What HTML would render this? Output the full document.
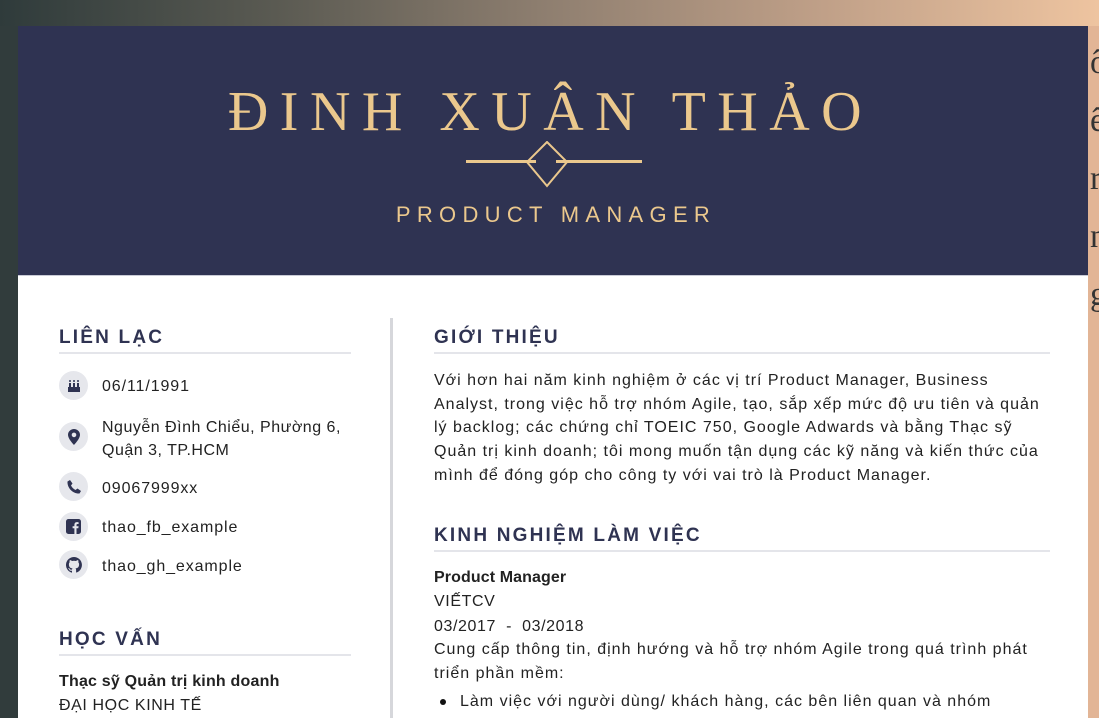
<!DOCTYPE html>
<html style="overflow:hidden;height:718px"><head><meta charset="utf-8"><style>
*{margin:0;padding:0;box-sizing:border-box}
body{width:1099px;height:718px;overflow:hidden;position:relative;font-family:"Liberation Sans","Noto Sans CJK SC",sans-serif;background:linear-gradient(90deg,#2f3b3b 0%,#5a5a52 25%,#8f7f70 50%,#c0a088 75%,#eec4a0 100%)}
.leftbg{position:absolute;left:0;top:26px;width:18px;height:692px;background:#313c3c}
.rightbg{position:absolute;left:1088px;top:26px;width:11px;height:692px;background:#e2b596;font-family:"Liberation Serif",serif;color:#333;font-size:34px;overflow:hidden}
.card{position:absolute;left:18px;top:26px;width:1070px;height:692px;background:#fff;overflow:hidden}
.hdr{position:absolute;left:0;top:0;width:1070px;height:250px;background:#2f3352;border-bottom:1px solid #c9cbd6}
.name{position:absolute;left:-8px;width:1070px;top:56px;text-align:center;font-family:"Liberation Serif",serif;color:#ebc88d;font-size:56px;letter-spacing:11.5px;padding-left:11px;line-height:60px;white-space:nowrap}
.sub{position:absolute;left:0;width:1070px;top:176px;text-align:center;color:#ebc88d;font-size:22px;letter-spacing:6.3px;padding-left:6px}
.h{position:absolute;color:#2f3352;font-weight:bold;font-size:19px;letter-spacing:2.2px;border-bottom:2px solid #e4e5ea;padding-bottom:2px;line-height:24px}
.t{position:absolute;color:#222;font-size:16px;line-height:23.7px;letter-spacing:0.6px;white-space:nowrap}
.ic{position:absolute;left:41px;width:29px;height:29px;border-radius:50%;background:#e6e7ec;display:flex;align-items:center;justify-content:center}
.ci{position:absolute;left:84px;color:#222;font-size:16px;line-height:23px;letter-spacing:0.9px;white-space:nowrap}
</style></head><body>
<div class="leftbg"></div>
<div class="rightbg"><div style="position:absolute;left:2px;top:8px;line-height:58px">ô<br>ê<br>r<br>n<br>g</div></div>
<div class="card">
<div class="hdr">
<div class="name">ĐINH XUÂN THẢO</div>
<svg style="position:absolute;left:448px;top:115px" width="176" height="48"><line x1="0" y1="20.5" x2="70" y2="20.5" stroke="#ebc88d" stroke-width="3"/><line x1="90" y1="20.5" x2="176" y2="20.5" stroke="#ebc88d" stroke-width="3"/><polygon points="81,1 101,21 81,45 61,21" fill="none" stroke="#ebc88d" stroke-width="2"/></svg>
<div class="sub">PRODUCT MANAGER</div>
</div>
<div style="position:absolute;left:372px;top:292px;width:3px;height:400px;background:#d6d7db"></div>

<div class="h" style="left:41px;top:300px;width:292px">LIÊN LẠC</div>
<div class="ic" style="top:345px"><svg width="16" height="16" viewBox="0 0 16 16"><rect x="2" y="9" width="12" height="5" fill="#2f3352"/><rect x="3" y="5" width="2" height="4" fill="#2f3352"/><rect x="7" y="5" width="2" height="4" fill="#2f3352"/><rect x="11" y="5" width="2" height="4" fill="#2f3352"/><circle cx="4" cy="3" r="1" fill="#2f3352"/><circle cx="8" cy="3" r="1" fill="#2f3352"/><circle cx="12" cy="3" r="1" fill="#2f3352"/></svg></div>
<div class="ci" style="top:349px">06/11/1991</div>
<div class="ic" style="top:396px"><svg width="12" height="16" viewBox="0 0 12 16"><path d="M6 0C2.7 0 0 2.6 0 5.8 0 10 6 16 6 16s6-6 6-10.2C12 2.6 9.3 0 6 0zm0 8.2a2.3 2.3 0 110-4.6 2.3 2.3 0 010 4.6z" fill="#2f3352"/></svg></div>
<div class="ci" style="top:390px;letter-spacing:0.5px">Nguyễn Đình Chiểu, Phường 6,<br>Quận 3, TP.HCM</div>
<div class="ic" style="top:446px"><svg width="14" height="14" viewBox="0 0 14 14"><path d="M3 0l2.5 3.5-1.5 2c1 2 2.5 3.5 4.5 4.5l2-1.5L14 11l-1.5 2.5C6 14 0 8 .5 1.5z" fill="#2f3352"/></svg></div>
<div class="ci" style="top:451px">09067999xx</div>
<div class="ic" style="top:486px"><svg width="15" height="15" viewBox="0 0 15 15"><rect width="15" height="15" rx="2.5" fill="#2f3352"/><path d="M10.5 15V9.3h1.8l.3-2h-2.1V6c0-.6.2-1 1-1h1.1V3.2c-.3 0-.9-.1-1.6-.1-1.6 0-2.6.9-2.6 2.7v1.5H6.6v2h1.8V15z" fill="#e6e7ec"/></svg></div>
<div class="ci" style="top:490px">thao_fb_example</div>
<div class="ic" style="top:524px"><svg width="16" height="16" viewBox="0 0 16 16"><path d="M8 0a8 8 0 00-2.5 15.6c.4 0 .5-.2.5-.4v-1.5c-2.2.5-2.7-1-2.7-1-.4-.9-.9-1.2-.9-1.2-.7-.5.1-.5.1-.5.8.1 1.2.8 1.2.8.7 1.3 1.9.9 2.3.7.1-.5.3-.9.5-1.1-1.8-.2-3.6-.9-3.6-4 0-.9.3-1.600.8-2.1-.1-.2-.4-1 .1-2.1 0 0 .7-.2 2.2.8a7.5 7.5 0 014 0c1.5-1 2.2-.8 2.2-.8.4 1.1.2 1.9.1 2.1.5.6.8 1.3.8 2.1 0 3.1-1.9 3.8-3.6 4 .3.3.6.8.6 1.5v2.2c0 .2.1.5.6.4A8 8 0 008 0z" fill="#2f3352"/></svg></div>
<div class="ci" style="top:529px">thao_gh_example</div>

<div class="h" style="left:41px;top:602px;width:292px">HỌC VẤN</div>
<div class="t" style="left:41px;top:644px;font-weight:bold;letter-spacing:0.2px">Thạc sỹ Quản trị kinh doanh</div>
<div class="t" style="left:41px;top:668px">ĐẠI HỌC KINH TẾ</div>

<div class="h" style="left:416px;top:300px;width:616px">GIỚI THIỆU</div>
<div class="t" style="left:416px;top:343px;letter-spacing:1.0px">Với hơn hai năm kinh nghiệm ở các vị trí Product Manager, Business<br>Analyst, trong việc hỗ trợ nhóm Agile, tạo, sắp xếp mức độ ưu tiên và quản<br>lý backlog; các chứng chỉ TOEIC 750, Google Adwards và bằng Thạc sỹ<br>Quản trị kinh doanh; tôi mong muốn tận dụng các kỹ năng và kiến thức của<br>mình để đóng góp cho công ty với vai trò là Product Manager.</div>
<div class="h" style="left:416px;top:498px;width:616px">KINH NGHIỆM LÀM VIỆC</div>
<div class="t" style="left:416px;top:540px;font-weight:bold;letter-spacing:0.1px">Product Manager</div>
<div class="t" style="left:416px;top:564px">VIẾTCV</div>
<div class="t" style="left:416px;top:589px">03/2017 &nbsp;- &nbsp;03/2018</div>
<div class="t" style="left:416px;top:612px;letter-spacing:1.0px">Cung cấp thông tin, định hướng và hỗ trợ nhóm Agile trong quá trình phát<br>triển phần mềm:</div>
<div style="position:absolute;left:422px;top:673px;width:6px;height:6px;border-radius:50%;background:#111"></div>
<div class="t" style="left:442px;top:664px;letter-spacing:1.0px">Làm việc với người dùng/ khách hàng, các bên liên quan và nhóm</div>
</div>
</body></html>
